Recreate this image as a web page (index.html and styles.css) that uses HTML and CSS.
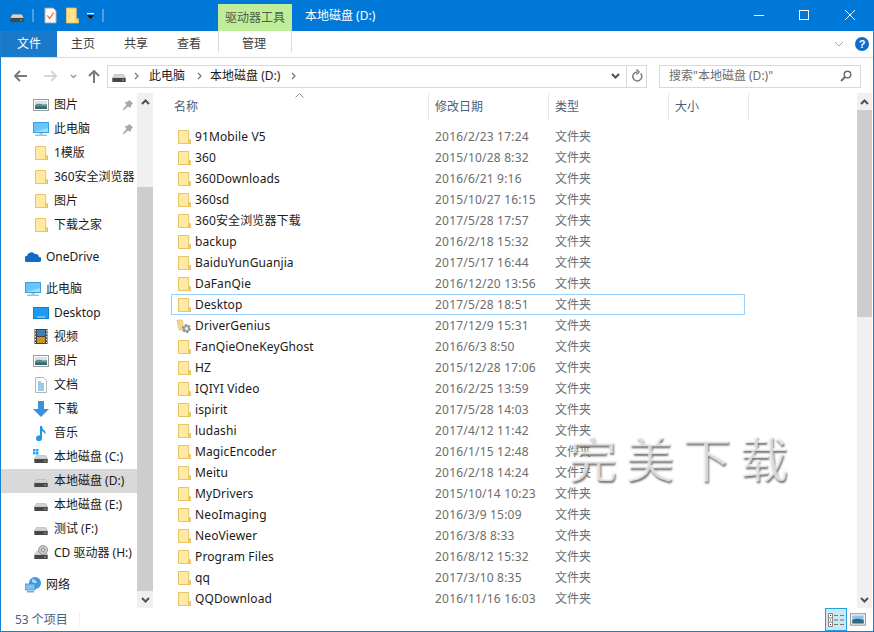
FILE: index.html
```html
<!DOCTYPE html>
<html lang="zh-CN">
<head>
<meta charset="utf-8">
<title>本地磁盘 (D:)</title>
<link rel="stylesheet" href="styles.css">
</head>
<body>
<svg class="defs" aria-hidden="true">
  <symbol id="folder" viewBox="0 0 16 16">
    <path d="M2.500 1.500h10.200v10.600h1.800v2.400H2.500z" fill="#ffe9a3" stroke="#e6c365"/>
    <path d="M12.700 14.500v-3.800h1.800v3.800z" fill="#f4cf6e" stroke="#e6c365"/>
  </symbol>
  <symbol id="drive" viewBox="0 0 16 16">
    <path d="M3.500 6.500h9l2 3.500H1.500z" fill="#d4d4d4" stroke="#b0b0b0" stroke-width=".6"/>
    <rect x="1.300" y="10" width="13.400" height="4" rx=".6" fill="#474747"/>
    <rect x="11" y="11.500" width="2" height="1.200" fill="#43d13f"/>
  </symbol>
  <symbol id="pic" viewBox="0 0 16 16">
    <rect x=".5" y="2.500" width="15" height="11" fill="#fff" stroke="#9c9c9c"/>
    <rect x="2" y="4" width="12" height="8" fill="#cfe3f4"/>
    <path d="M2 8q3-2 6-1t6 0v5H2z" fill="#5d8a7d"/>
    <path d="M2 10q4-1 12 0v2H2z" fill="#2f6a80"/>
  </symbol>
  <symbol id="monitor" viewBox="0 0 16 16">
    <rect x=".5" y="1.500" width="15" height="10" fill="#66c5fb" stroke="#3a9fe0"/>
    <path d="M1 11h14V7Q7 9 1 11z" fill="#9ddcfd"/>
    <rect x="6.500" y="12" width="3" height="1.500" fill="#a9bcc9"/>
    <rect x="2" y="13.500" width="12" height="1.500" fill="#a9bcc9"/>
  </symbol>
  <symbol id="pin" viewBox="0 0 12 12">
    <path d="M7.500 1l3.500 3.500-1 .5-1 2-.5 2L6 7.500 2 11l-1 0 0-1 3.500-4L2.500 3.500l2-.5 2-1z" fill="#a9a9a9"/>
  </symbol>
  <symbol id="up" viewBox="0 0 9 6">
    <path d="M1 5l3.500-3.500L8 5" fill="none" stroke="#505050" stroke-width="2"/>
  </symbol>
  <symbol id="down" viewBox="0 0 9 6">
    <path d="M1 1l3.500 3.500L8 1" fill="none" stroke="#505050" stroke-width="2"/>
  </symbol>
  <symbol id="crumb" viewBox="0 0 5 8">
    <path d="M1 1l3 3-3 3" fill="none" stroke="#7a7a7a" stroke-width="1.300"/>
  </symbol>
</svg>

<div class="window">
  <header class="titlebar">
    <div class="qat">
      <svg class="ico16"><use href="#drive"/></svg>
      <span class="qat-sep"></span>
      <svg class="ico-props" viewBox="0 0 14 18"><path d="M1 1h9l3 3v13H1z" fill="#fafafa" stroke="#a8a8a8"/><path d="M3.500 9l2.500 3 4.500-6" fill="none" stroke="#e8592b" stroke-width="1.200"/></svg>
      <svg class="ico-newfolder" viewBox="0 0 14 18"><path d="M.5 1h10.500v13h2.500v3H.5z" fill="#ffe28a" stroke="#e6c365"/><path d="M11 17v-5h2.500v5z" fill="#f4cf6e"/></svg>
      <svg class="ico-qatdrop" viewBox="0 0 7 6"><rect width="7" height="1.200" fill="#fff"/><path d="M0 2.200h7L3.500 6z" fill="#111"/></svg>
      <span class="qat-sep"></span>
    </div>
    <div class="context-tab">驱动器工具</div>
    <div class="title-text">本地磁盘 (D:)</div>
    <div class="winctl">
      <svg viewBox="0 0 46 31"><path d="M18 15.500h10" stroke="#fff" fill="none"/></svg>
      <svg viewBox="0 0 46 31"><rect x="17.500" y="10.500" width="9" height="9" stroke="#fff" fill="none"/></svg>
      <svg viewBox="0 0 46 31"><path d="M17 10l10 10M27 10L17 20" stroke="#fff" fill="none"/></svg>
    </div>
  </header>

  <nav class="tabs">
    <div class="tab-file">文件</div>
    <div class="tab tab-home">主页</div>
    <div class="tab tab-share">共享</div>
    <div class="tab tab-view">查看</div>
    <div class="tab tab-manage">管理</div>
    <div class="tab-right">
      <svg class="ribbon-chev" viewBox="0 0 10 6"><path d="M1 1l4 4 4-4" fill="none" stroke="#a8a8a8"/></svg>
      <span class="help">?</span>
    </div>
  </nav>

  <div class="navbar">
    <svg class="nav-ico nav-back" viewBox="0 0 13 12"><path d="M6 1L1 6l5 5M1 6h12" fill="none" stroke="#7b7b7b" stroke-width="2"/></svg>
    <svg class="nav-ico nav-fwd" viewBox="0 0 13 12"><path d="M7 1l5 5-5 5M12 6H0" fill="none" stroke="#d6d6d6" stroke-width="2"/></svg>
    <svg class="nav-recent" viewBox="0 0 7 5"><path d="M1 1l2.500 2.500L6 1" fill="none" stroke="#9a9a9a" stroke-width="1.500"/></svg>
    <svg class="nav-ico nav-up" viewBox="0 0 12 13"><path d="M1 6l5-5 5 5M6 1v12" fill="none" stroke="#7b7b7b" stroke-width="2"/></svg>
    <div class="address">
      <svg class="ico16 addr-drive"><use href="#drive"/></svg>
      <svg class="crumb crumb-first"><use href="#crumb"/></svg>
      <span class="addr-text addr-pc">此电脑</span>
      <svg class="crumb crumb-second"><use href="#crumb"/></svg>
      <span class="addr-text addr-disk">本地磁盘 (D:)</span>
      <svg class="crumb crumb-last"><use href="#crumb"/></svg>
      <span class="addr-fill"></span>
      <svg class="addr-drop"><use href="#down"/></svg>
      <span class="addr-refresh">
        <svg viewBox="0 0 12 14"><path d="M9.700 4.500A4.500 4.500 0 1 1 6 3M5.500 .5L8 3 5.500 5.500" fill="none" stroke="#7b7b7b" stroke-width="1.500"/></svg>
      </span>
    </div>
    <div class="search">
      <span class="search-text">搜索"本地磁盘 (D:)"</span>
      <svg viewBox="0 0 12 12"><circle cx="7.500" cy="4.500" r="3.300" fill="none" stroke="#6d6d6d" stroke-width="1.500"/><path d="M5 7l-4 4" stroke="#6d6d6d" stroke-width="2"/></svg>
    </div>
  </div>

  <div class="main">
    <aside class="tree">
      <div class="tree-inner">
        <div class="node sub"><svg class="ico16"><use href="#pic"/></svg><span>图片</span><svg class="pin"><use href="#pin"/></svg></div>
        <div class="node sub"><svg class="ico16"><use href="#monitor"/></svg><span>此电脑</span><svg class="pin"><use href="#pin"/></svg></div>
        <div class="node sub"><svg class="ico16"><use href="#folder"/></svg><span>1模版</span></div>
        <div class="node sub"><svg class="ico16"><use href="#folder"/></svg><span>360安全浏览器</span></div>
        <div class="node sub"><svg class="ico16"><use href="#folder"/></svg><span>图片</span></div>
        <div class="node sub"><svg class="ico16"><use href="#folder"/></svg><span>下载之家</span></div>

        <div class="node top group"><svg class="ico16" viewBox="0 0 16 16"><path d="M2 13a3 3 0 0 1 0-6 4.500 4.500 0 0 1 8-2 3.500 3.500 0 0 1 4 3 2.500 2.500 0 0 1 0 5z" fill="#0f6cc4"/></svg><span>OneDrive</span></div>

        <div class="node top group"><svg class="ico16"><use href="#monitor"/></svg><span>此电脑</span></div>
        <div class="node sub"><svg class="ico16" viewBox="0 0 16 16"><rect x=".5" y="2.500" width="15" height="11" fill="#1e9bf0" stroke="#0f7fd0"/><path d="M4 12h8" stroke="#bfe4fb"/></svg><span>Desktop</span></div>
        <div class="node sub"><svg class="ico16" viewBox="0 0 16 16"><rect x="1.500" width="13" height="15" fill="#444"/><rect x="4" y="1" width="8" height="6" fill="#3d7fb6"/><rect x="4" y="8" width="8" height="6" fill="#d0921f"/><path d="M2.500 1v13M13.500 1v13" stroke="#ddd" stroke-dasharray="1.500 1.500"/></svg><span>视频</span></div>
        <div class="node sub"><svg class="ico16"><use href="#pic"/></svg><span>图片</span></div>
        <div class="node sub"><svg class="ico16" viewBox="0 0 16 16"><path d="M2.500.5h8l3 3v12h-11z" fill="#fff" stroke="#b5b5b5"/><path d="M5 5h3M5 7h6M5 9h6M5 11h6M5 13h6" stroke="#3c93d8"/></svg><span>文档</span></div>
        <div class="node sub"><svg class="ico16" viewBox="0 0 16 16"><path d="M5 0h6v8h5l-8 8-8-8h5z" fill="#3b8fdc"/></svg><span>下载</span></div>
        <div class="node sub"><svg class="ico16" viewBox="0 0 16 16"><path d="M7 1h2q0 3 3 5 1 2 0 3-1-2-3-3v7a3 3 0 1 1-2-2.500z" fill="#1f96ea"/></svg><span>音乐</span></div>
        <div class="node sub"><svg class="ico16" viewBox="0 0 16 16"><use href="#drive"/><rect x="0" y="0" width="2.500" height="2.500" fill="#2aa7f0"/><rect x="3" y="0" width="2.500" height="2.500" fill="#2aa7f0"/><rect x="0" y="3" width="2.500" height="2.500" fill="#2aa7f0"/><rect x="3" y="3" width="2.500" height="2.500" fill="#2aa7f0"/></svg><span>本地磁盘 (C:)</span></div>
        <div class="node sub selected"><svg class="ico16"><use href="#drive"/></svg><span>本地磁盘 (D:)</span></div>
        <div class="node sub"><svg class="ico16"><use href="#drive"/></svg><span>本地磁盘 (E:)</span></div>
        <div class="node sub"><svg class="ico16"><use href="#drive"/></svg><span>测试 (F:)</span></div>
        <div class="node sub"><svg class="ico16" viewBox="0 0 16 16"><use href="#drive"/><circle cx="10" cy="5" r="4.500" fill="#c8c8c8" stroke="#999"/><circle cx="10" cy="5" r="1.500" fill="#fff" stroke="#888"/></svg><span>CD 驱动器 (H:)</span></div>

        <div class="node top group"><svg class="ico16" viewBox="0 0 16 16"><circle cx="10" cy="6" r="6" fill="#3f9adf"/><path d="M7 2q4 0 5 4-3 1-5-1z" fill="#a8d8f5"/><rect x="0" y="7" width="10" height="6" fill="#7cc4ee" stroke="#3a8dc8" stroke-width=".8"/><rect x="2" y="14" width="7" height="1.500" fill="#8aa4b5"/></svg><span>网络</span></div>
      </div>
    </aside>
    <div class="sbar sbar-tree">
      <div class="sb-btn"><svg><use href="#up"/></svg></div>
      <div class="sb-gap-top"></div>
      <div class="sb-thumb"></div>
      <div class="sb-btn"><svg><use href="#down"/></svg></div>
    </div>

    <section class="files">
      <div class="head">
        <div class="hcell hname">名称<svg class="sort" viewBox="0 0 9 5"><path d="M.5 4.500l4-4 4 4" fill="none" stroke="#8d8d8d"/></svg></div>
        <div class="hcell">修改日期</div>
        <div class="hcell">类型</div>
        <div class="hcell hsize">大小</div>
      </div>
      <div class="rows">
        <div class="row"><div class="nm"><svg class="fi"><use href="#folder"/></svg>91Mobile V5</div><div class="dt">2016/2/23 17:24</div><div class="ty">文件夹</div></div>
        <div class="row"><div class="nm"><svg class="fi"><use href="#folder"/></svg>360</div><div class="dt">2015/10/28 8:32</div><div class="ty">文件夹</div></div>
        <div class="row"><div class="nm"><svg class="fi"><use href="#folder"/></svg>360Downloads</div><div class="dt">2016/6/21 9:16</div><div class="ty">文件夹</div></div>
        <div class="row"><div class="nm"><svg class="fi"><use href="#folder"/></svg>360sd</div><div class="dt">2015/10/27 16:15</div><div class="ty">文件夹</div></div>
        <div class="row"><div class="nm"><svg class="fi"><use href="#folder"/></svg>360安全浏览器下载</div><div class="dt">2017/5/28 17:57</div><div class="ty">文件夹</div></div>
        <div class="row"><div class="nm"><svg class="fi"><use href="#folder"/></svg>backup</div><div class="dt">2016/2/18 15:32</div><div class="ty">文件夹</div></div>
        <div class="row"><div class="nm"><svg class="fi"><use href="#folder"/></svg>BaiduYunGuanjia</div><div class="dt">2017/5/17 16:44</div><div class="ty">文件夹</div></div>
        <div class="row"><div class="nm"><svg class="fi"><use href="#folder"/></svg>DaFanQie</div><div class="dt">2016/12/20 13:56</div><div class="ty">文件夹</div></div>
        <div class="row focus"><div class="nm"><svg class="fi"><use href="#folder"/></svg>Desktop</div><div class="dt">2017/5/28 18:51</div><div class="ty">文件夹</div></div>
        <div class="row"><div class="nm"><svg class="fi" viewBox="0 0 16 16"><path d="M1 2h5l1 2v8H3z" fill="#f2d88c" stroke="#d8b765" stroke-width=".6"/><circle cx="10.500" cy="10.500" r="3.500" fill="#a5a5a5" stroke="#8d8d8d" stroke-width="2" stroke-dasharray="2 1.600"/><circle cx="10.500" cy="10.500" r="1.500" fill="#eee"/></svg>DriverGenius</div><div class="dt">2017/12/9 15:31</div><div class="ty">文件夹</div></div>
        <div class="row"><div class="nm"><svg class="fi"><use href="#folder"/></svg>FanQieOneKeyGhost</div><div class="dt">2016/6/3 8:50</div><div class="ty">文件夹</div></div>
        <div class="row"><div class="nm"><svg class="fi"><use href="#folder"/></svg>HZ</div><div class="dt">2015/12/28 17:06</div><div class="ty">文件夹</div></div>
        <div class="row"><div class="nm"><svg class="fi"><use href="#folder"/></svg>IQIYI Video</div><div class="dt">2016/2/25 13:59</div><div class="ty">文件夹</div></div>
        <div class="row"><div class="nm"><svg class="fi"><use href="#folder"/></svg>ispirit</div><div class="dt">2017/5/28 14:03</div><div class="ty">文件夹</div></div>
        <div class="row"><div class="nm"><svg class="fi"><use href="#folder"/></svg>ludashi</div><div class="dt">2017/4/12 11:42</div><div class="ty">文件夹</div></div>
        <div class="row"><div class="nm"><svg class="fi"><use href="#folder"/></svg>MagicEncoder</div><div class="dt">2016/1/15 12:48</div><div class="ty">文件夹</div></div>
        <div class="row"><div class="nm"><svg class="fi"><use href="#folder"/></svg>Meitu</div><div class="dt">2016/2/18 14:24</div><div class="ty">文件夹</div></div>
        <div class="row"><div class="nm"><svg class="fi"><use href="#folder"/></svg>MyDrivers</div><div class="dt">2015/10/14 10:23</div><div class="ty">文件夹</div></div>
        <div class="row"><div class="nm"><svg class="fi"><use href="#folder"/></svg>NeoImaging</div><div class="dt">2016/3/9 15:09</div><div class="ty">文件夹</div></div>
        <div class="row"><div class="nm"><svg class="fi"><use href="#folder"/></svg>NeoViewer</div><div class="dt">2016/3/8 8:33</div><div class="ty">文件夹</div></div>
        <div class="row"><div class="nm"><svg class="fi"><use href="#folder"/></svg>Program Files</div><div class="dt">2016/8/12 15:32</div><div class="ty">文件夹</div></div>
        <div class="row"><div class="nm"><svg class="fi"><use href="#folder"/></svg>qq</div><div class="dt">2017/3/10 8:35</div><div class="ty">文件夹</div></div>
        <div class="row"><div class="nm"><svg class="fi"><use href="#folder"/></svg>QQDownload</div><div class="dt">2016/11/16 16:03</div><div class="ty">文件夹</div></div>
      </div>
      <div class="watermark">完美下载</div>
    </section>
    <div class="sbar sbar-files">
      <div class="sb-btn"><svg><use href="#up"/></svg></div>
      <div class="sb-thumb"></div>
      <div class="sb-rest"></div>
      <div class="sb-btn"><svg><use href="#down"/></svg></div>
    </div>
  </div>

  <footer class="status">
    <span class="count">53 个项目</span>
    <span class="status-sep"></span>
    <span class="views">
      <span class="view active"><svg viewBox="0 0 16 16"><path d="M.5 1.500h4v13h-4zM.5 5.800h4M.5 10.200h4" fill="#fff" stroke="#8a8a8a"/><path d="M2 3.500h1M2 8h1M2 12.500h1" stroke="#333"/><path d="M6 3.500h4M12 3.500h4M6 8h4M12 8h4M6 12.500h4M12 12.500h4" stroke="#777"/></svg></span>
      <span class="view"><svg viewBox="0 0 14 12"><rect x=".5" y=".5" width="13" height="10" fill="#fff" stroke="#9c9c9c"/><rect x="2" y="2" width="10" height="7" fill="#8fc1ee"/><path d="M2 6q4-2 10 0v3H2z" fill="#2f6a80"/></svg></span>
    </span>
  </footer>
</div>
</body>
</html>
```

FILE: styles.css
```css
* { box-sizing: border-box; }
html, body { margin: 0; padding: 0; }
body {
  width: 874px;
  height: 632px;
  overflow: hidden;
  background: #fff;
  font: 12px/16px "Noto Sans", "Noto Sans CJK SC", sans-serif;
  color: #1a1a1a;
}
.defs { width: 0; height: 0; display: block; position: absolute; }
.window {
  width: 874px;
  height: 632px;
  border: 1px solid #1a7fd0;
  border-top: 0;
  display: flex;
  flex-direction: column;
}
.ico16 { width: 16px; height: 16px; flex: none; }

/* title bar */
.titlebar {
  height: 31px;
  flex: none;
  margin: 0 -1px;
  background: #0078d7;
  display: flex;
  align-items: flex-end;
  color: #fff;
}
.qat {
  display: flex;
  align-items: center;
  height: 31px;
  padding-left: 9px;
  width: 218px;
}
.qat-sep { width: 2px; height: 13px; background: #4fa0e2; margin-left: 7px; }
.ico-props { width: 13px; height: 17px; margin-left: 10px; }
.ico-newfolder { width: 13px; height: 17px; margin-left: 9px; }
.ico-qatdrop { width: 7px; height: 6px; margin-left: 8px; }
.qat .qat-sep:last-child { margin-left: 8px; }
.context-tab {
  width: 74px;
  height: 27px;
  background: #c0ed9a;
  color: #4f5b48;
  text-align: center;
  line-height: 27px;
  font-size: 12px;
}
.title-text { margin-left: 13px; height: 31px; line-height: 31px; }
.winctl { margin-left: auto; height: 31px; display: flex; }
.winctl svg { width: 46px; height: 31px; }

/* ribbon tabs */
.tabs {
  height: 27px;
  flex: none;
  display: flex;
  align-items: stretch;
  border-bottom: 1px solid #dadbdc;
  position: relative;
}
.tab-file {
  width: 56px;
  height: 26px;
  background: #1979ca;
  color: #fff;
  text-align: center;
  line-height: 26px;
}
.tab { line-height: 26px; color: #3b3b3b; }
.tab-home { margin-left: 14px; }
.tab-share { margin-left: 29px; }
.tab-view { margin-left: 29px; }
.tab-manage {
  margin-left: 17px;
  width: 74px;
  padding-right: 2px;
  text-align: center;
  border-left: 1px solid #dadbdc;
  border-right: 1px solid #dadbdc;
  height: 21px;
  line-height: 26px;
}
.tab-right { margin-left: auto; display: flex; align-items: center; padding-right: 4px; }
.ribbon-chev { width: 10px; height: 6px; margin-right: 11px; }
.help {
  width: 14px;
  height: 14px;
  border-radius: 50%;
  background: #0f6fc6;
  color: #fff;
  font: bold 11px/14px "Liberation Sans", sans-serif;
  text-align: center;
}

/* navigation */
.navbar {
  height: 35px;
  flex: none;
  display: flex;
  align-items: center;
  padding-top: 1px;
  padding-left: 13px;
}
.nav-ico { width: 13px; height: 12px; flex: none; }
.nav-fwd { margin-left: 17px; }
.nav-recent { width: 7px; height: 5px; margin-left: 13px; }
.nav-up { width: 12px; height: 13px; margin-left: 11px; }
.address {
  width: 540px;
  height: 23px;
  margin-left: 7px;
  border: 1px solid #d9d9d9;
  display: flex;
  align-items: center;
  padding-left: 3px;
}
.crumb { width: 5px; height: 8px; flex: none; }
.crumb-first { margin-left: 7px; }
.crumb-second { margin-left: 12px; }
.crumb-last { margin-left: 11px; }
.addr-pc { margin-left: 10px; }
.addr-disk { margin-left: 8px; }
.addr-fill { flex: 1; }
.addr-drop { width: 9px; height: 6px; margin-right: 6px; }
.addr-refresh {
  width: 20px;
  height: 21px;
  border-left: 1px solid #d9d9d9;
  display: flex;
  align-items: center;
  justify-content: center;
}
.addr-refresh svg { width: 12px; height: 14px; }
.search {
  width: 202px;
  height: 23px;
  margin-left: 12px;
  border: 1px solid #d9d9d9;
  display: flex;
  align-items: center;
  justify-content: space-between;
  padding: 0 8px 0 9px;
  color: #6d6d6d;
}
.search svg { width: 12px; height: 12px; }

/* main */
.main { flex: 1; min-height: 0; display: flex; position: relative; }
.tree { width: 136px; flex: none; overflow: hidden; }
.node {
  height: 24px;
  display: flex;
  align-items: center;
  white-space: nowrap;
  overflow: hidden;
}
.node span { margin-left: 5px; }
.node.sub { padding-left: 32px; }
.node.top { padding-left: 24px; }
.node.group { margin-top: 8px; }
.node.selected { background: #d9d9d9; }
.pin { width: 12px; height: 12px; position: absolute; left: 121px; }

.sbar {
  width: 15px;
  flex: none;
  display: flex;
  flex-direction: column;
  background: #f0f0f0;
}
.sb-btn { height: 17px; flex: none; display: flex; align-items: center; justify-content: center; }
.sb-btn svg { width: 9px; height: 6px; }
.sb-thumb { background: #cdcdcd; }
.sbar-tree { width: 16px; }
.sbar-tree .sb-gap-top { height: 77px; flex: none; }
.sbar-tree .sb-thumb { flex: 1; }
.sbar-files { margin-right: 1px; }
.sbar-files .sb-thumb { height: 207px; flex: none; }
.sb-rest { flex: 1; }

/* file list */
.files { flex: 1; min-width: 0; overflow: hidden; }
.head {
  height: 27px;
  margin-left: 18px;
  display: flex;
  color: #4c607a;
}
.hcell {
  width: 120px;
  border-right: 1px solid #e5e5e5;
  padding: 6px 0 0 6px;
  position: relative;
}
.hname { width: 258px; padding-left: 3px; }
.hsize { width: 80px; }
.sort { width: 9px; height: 5px; position: absolute; left: 124px; top: 0; }
.rows { margin-top: 6px; margin-left: 18px; }
.row {
  height: 21px;
  width: 574px;
  display: flex;
  align-items: center;
  white-space: nowrap;
}
.row.focus { outline: 1px solid #99d1ff; outline-offset: -1px; }
.nm { width: 264px; padding-left: 5px; display: flex; align-items: center; color: #1a1a1a; letter-spacing: .12px; }
.fi { width: 16px; height: 16px; margin-right: 3px; flex: none; }
.dt { width: 120px; color: #6d6d6d; letter-spacing: .2px; }
.ty { color: #6d6d6d; }
.watermark {
  position: absolute;
  left: 568px;
  top: 336px;
  font-size: 48px;
  line-height: 60px;
  letter-spacing: 9px;
  color: rgba(255, 255, 255, .7);
  text-shadow: 1px 2px 2px #777;
  white-space: nowrap;
}

/* status */
.status {
  height: 23px;
  flex: none;
  display: flex;
  align-items: center;
  padding-left: 14px;
  color: #4c607a;
}
.count { width: 64px; }
.status-sep { width: 1px; height: 15px; background: #f0f0f0; }
.views { margin-left: auto; margin-right: 4px; display: flex; align-items: center; }
.view { width: 22px; height: 23px; display: flex; align-items: center; justify-content: center; }
.view svg { width: 16px; height: 16px; }
.view.active { background: #cce8f6; border: 1px solid #26a0da; }
```
